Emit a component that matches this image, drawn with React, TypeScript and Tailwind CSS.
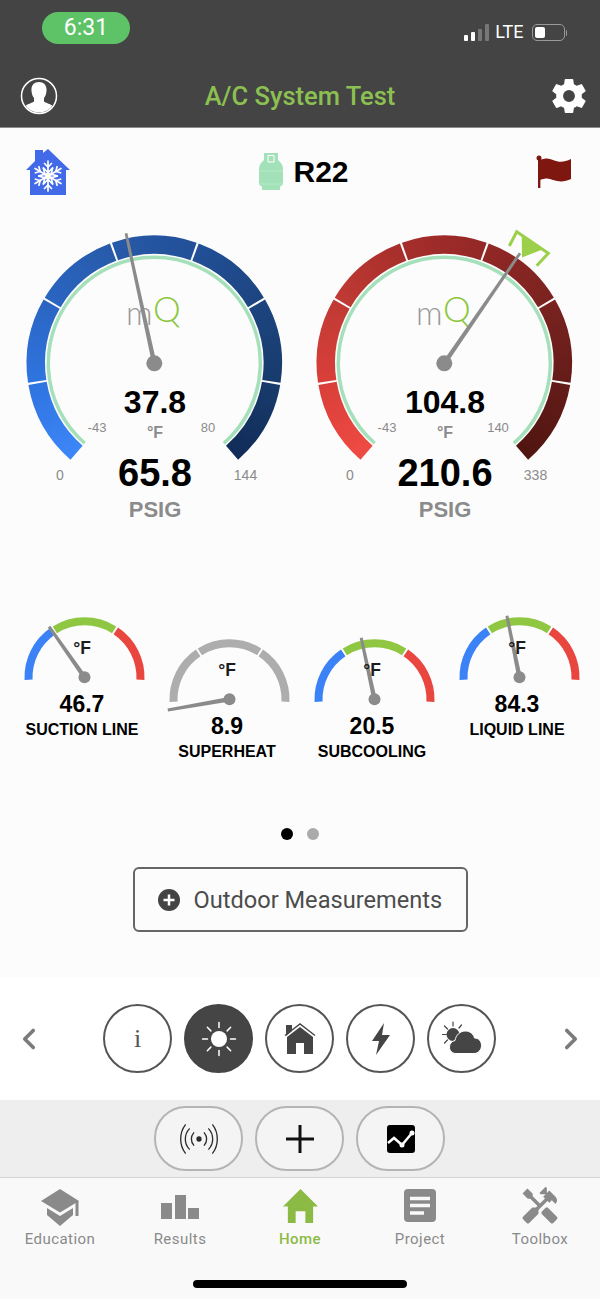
import { ChevronLeft, ChevronRight } from "lucide-react";
import { IoSettingsSharp } from "react-icons/io5";
import { MdHandyman } from "react-icons/md";

const arial = "font-['Liberation_Sans',Arial,sans-serif]";

// d: degrees clockwise from the left horizontal
const pt = (cx: number, cy: number, r: number, d: number) => {
  const a = (d * Math.PI) / 180;
  return [cx - r * Math.cos(a), cy - r * Math.sin(a)];
};

const arc = (cx: number, cy: number, r: number, from: number, to: number) => {
  const [x1, y1] = pt(cx, cy, r, from);
  const [x2, y2] = pt(cx, cy, r, to);
  return `M${x1} ${y1}A${r} ${r} 0 ${to - from > 180 ? 1 : 0} 1 ${x2} ${y2}`;
};

function Needle({ cx, cy, tx, ty, base, tip, hub }: { cx: number; cy: number; tx: number; ty: number; base: number; tip: number; hub: number }) {
  const len = Math.hypot(tx - cx, ty - cy);
  const nx = -(ty - cy) / len;
  const ny = (tx - cx) / len;
  const points = [
    [cx + (nx * base) / 2, cy + (ny * base) / 2],
    [tx + (nx * tip) / 2, ty + (ny * tip) / 2],
    [tx - (nx * tip) / 2, ty - (ny * tip) / 2],
    [cx - (nx * base) / 2, cy - (ny * base) / 2],
  ]
    .map((p) => p.join(","))
    .join(" ");
  return (
    <g fill="#8b8b8b">
      <polygon points={points} />
      <circle cx={cx} cy={cy} r={hub} />
    </g>
  );
}

type BigGaugeProps = {
  id: string;
  colors: string[];
  needle: [number, number];
  temp: string;
  pressure: string;
  tempMax: string;
  max: string;
  marker?: boolean;
};

function BigGauge({ id, colors, needle, temp, pressure, tempMax, max, marker }: BigGaugeProps) {
  const cx = 144.3;
  const cy = 143.3;
  const r = 118.5;
  const step = 278 / 7;
  const segs = Array.from({ length: 7 }, (_, i) => i);

  return (
    <div className={`relative h-[310px] w-[290px] ${arial}`}>
      <svg viewBox="0 0 290 310" className="absolute inset-0 h-[310px] w-[290px]">
        <defs>
          {segs.map((i) => {
            const [x1, y1] = pt(cx, cy, r, -49 + step * i);
            const [x2, y2] = pt(cx, cy, r, -49 + step * (i + 1));
            return (
              <linearGradient key={i} id={`${id}${i}`} gradientUnits="userSpaceOnUse" x1={x1} y1={y1} x2={x2} y2={y2}>
                <stop offset="0" stopColor={colors[i]} />
                <stop offset="1" stopColor={colors[i + 1]} />
              </linearGradient>
            );
          })}
        </defs>
        {segs.map((i) => (
          <path
            key={i}
            d={arc(cx, cy, r, -49 + step * i + (i ? 0.5 : 0), -49 + step * (i + 1) - (i < 6 ? 0.5 : 0))}
            fill="none"
            stroke={`url(#${id}${i})`}
            strokeWidth="18.5"
          />
        ))}
        <path d={arc(cx, cy, 106, -49, 229)} fill="none" stroke="#a5e0bb" strokeWidth="3.5" />
        <text x="116" y="105" fontSize="33" fill="#999999" fontWeight="300" className="font-['Lato',sans-serif]">
          m
        </text>
        <text x="143" y="102" fontSize="35" fill="#8cc63f" fontWeight="300" className="font-['Lato',sans-serif]">
          Q
        </text>
        {marker && (
          <g transform="translate(-300 -220)">
            <polyline points="509.3,246 516.7,231.7 548.3,253.3 536.7,265.7" fill="none" stroke="#9ccf4a" strokeWidth="3" />
            <polygon points="521.7,234 543,249.3 522,257.5" fill="#9ccf4a" />
          </g>
        )}
        <Needle cx={cx} cy={cy} tx={needle[0]} ty={needle[1]} base={4.5} tip={2.8} hub={8} />
      </svg>

      <span className="absolute left-[87px] top-[207px] -translate-x-1/2 -translate-y-1/2 text-[13px] leading-none text-[#8b8b8b]">-43</span>
      <span className="absolute left-[198px] top-[207px] -translate-x-1/2 -translate-y-1/2 text-[13px] leading-none text-[#8b8b8b]">{tempMax}</span>
      <span className="absolute left-[50px] top-[255px] -translate-x-1/2 -translate-y-1/2 text-[14px] leading-none text-[#8b8b8b]">0</span>
      <span className="absolute left-[235.5px] top-[255px] -translate-x-1/2 -translate-y-1/2 text-[14px] leading-none text-[#8b8b8b]">{max}</span>

      <div className="absolute inset-x-0 top-[164px] flex flex-col items-center">
        <span className="h-[37px] text-[32px] font-bold leading-[37px] text-black">{temp}</span>
        <span className="mt-1 h-4 text-[16px] font-bold leading-4 text-[#8b8b8b]">°F</span>
        <span className="mt-3 h-10 text-[38px] font-bold leading-10 text-black">{pressure}</span>
        <span className="mt-[5px] h-6 text-[22px] font-bold leading-6 text-[#8b8b8b]">PSIG</span>
      </div>
    </div>
  );
}

const COLD = ["#3d86f8", "#2f74e0", "#2b65c2", "#275aa9", "#224f97", "#1c4580", "#183b6c", "#112c58"];
const HOT = ["#ee4b43", "#d93f39", "#c03a34", "#a62e2b", "#922826", "#7a2320", "#641c19", "#501510"];

type SmallGaugeProps = {
  tip: [number, number];
  value: string;
  label: string;
  colors: [string, string, string];
  lowered?: boolean;
};

function SmallGauge({ tip, value, label, colors, lowered }: SmallGaugeProps) {
  const cx = 72.5;
  const cy = 67.3;
  return (
    <div className={`flex w-[145px] flex-col ${lowered ? "mt-[22px]" : ""} ${arial}`}>
      <div className="relative h-20">
        <svg viewBox="0 0 145 80" className="absolute inset-0 h-20 w-[145px]">
          <path d={arc(cx, cy, 56, -2.5, 56)} fill="none" stroke={colors[0]} strokeWidth="8" />
          <path d={arc(cx, cy, 56, 58, 122)} fill="none" stroke={colors[1]} strokeWidth="8" />
          <path d={arc(cx, cy, 56, 124, 182.5)} fill="none" stroke={colors[2]} strokeWidth="8" />
          <Needle cx={cx} cy={cy} tx={tip[0]} ty={tip[1]} base={4.5} tip={3} hub={6} />
        </svg>
        <span className="absolute left-[70px] top-[39px] -translate-x-1/2 -translate-y-1/2 text-[17.5px] font-bold leading-none text-[#1c1c1c]">°F</span>
      </div>
      <div className="flex flex-col items-center pr-[5px]">
        <span className="h-7 text-[23px] font-bold leading-7 text-black">{value}</span>
        <span className="mt-[3px] h-[18px] whitespace-nowrap text-[16px] font-bold leading-[18px] text-black">{label}</span>
      </div>
    </div>
  );
}

const LINE_COLORS: [string, string, string] = ["#3b82f6", "#8fc743", "#e8463f"];
const GREY_COLORS: [string, string, string] = ["#adadad", "#adadad", "#adadad"];

function SnowHouse() {
  return (
    <svg width="46" height="48" viewBox="0 0 46 48">
      <path d="M1 22 10 13V2h8v3l5-4 22 21h-4v25H5V22z" fill="#4169e8" />
      <g stroke="#ffffff" strokeWidth="1.7" strokeLinecap="round" fill="none">
        {[0, 60, 120].map((a) => (
          <g key={a} transform={`rotate(${a} 23 28)`}>
            <path d="M23 13v30" />
            <path d="M19.5 15.5 23 19l3.5-3.5M19.5 40.5 23 37l3.5 3.5" />
            <path d="M18.5 20 23 24.5l4.5-4.5M18.5 36 23 31.5l4.5 4.5" />
          </g>
        ))}
      </g>
      <circle cx="23" cy="28" r="3.5" fill="#ffffff" />
    </svg>
  );
}

function Cylinder() {
  return (
    <svg width="24" height="37" viewBox="0 0 24 37" fill="#a3e2b8">
      <path d="M5 0h14v7l2 2c2 2 3 4 3 7v14c0 2-1 3-3 3.5V37H3v-3.5C1 33 0 32 0 30V16c0-3 1-5 3-7l2-2z" />
      <path d="M9 2.5h6V9H9z" fill="none" stroke="#ffffff" strokeWidth="1" />
      <path d="M0 18h24M0 31h24" stroke="#c4eed2" strokeWidth="0.6" />
    </svg>
  );
}

function Flag() {
  return (
    <svg width="37" height="33" viewBox="0 0 37 33" fill="#7d1710">
      <circle cx="4" cy="3" r="2.5" />
      <rect x="3" y="3" width="2.4" height="30" />
      <path d="M5 5c5-2 9-2 13 0 6 2.5 11 2.5 18-1v20c-6 3-12 3-18 1-4-2-8-2-13 0z" />
    </svg>
  );
}

function Avatar() {
  return (
    <svg width="38" height="38" viewBox="0 0 38 38">
      <defs>
        <clipPath id="avatar-clip">
          <circle cx="19" cy="19" r="16.5" />
        </clipPath>
      </defs>
      <circle cx="19" cy="19" r="17.5" fill="none" stroke="#ffffff" strokeWidth="1.5" />
      <g clipPath="url(#avatar-clip)" fill="#ffffff">
        <path d="M19 5c5 0 8 3.5 7.5 9-.3 3-1 5-2.5 7v3.5c1 1.5 8 2.5 9 5.5v8H5v-8c1-3 8-4 9-5.5V21c-1.5-2-2.2-4-2.5-7C11 8.5 14 5 19 5z" />
      </g>
    </svg>
  );
}

function SunIcon({ color }: { color: string }) {
  return (
    <svg width="36" height="36" viewBox="0 0 36 36" stroke={color} strokeWidth="1.5" strokeLinecap="round">
      <circle cx="18" cy="18" r="8" fill={color} stroke="none" />
      {[0, 45, 90, 135, 180, 225, 270, 315].map((a) => (
        <path key={a} d="M18 1.5v5" transform={`rotate(${a} 18 18)`} />
      ))}
    </svg>
  );
}

function HouseIcon() {
  return (
    <svg width="32" height="32" viewBox="0 0 32 32" fill="#454545">
      <path d="M2 2h6v6l-6 5z" />
      <path d="M1 12.5 16 1l15 11.5" fill="none" stroke="#454545" strokeWidth="1.4" />
      <path d="M16 4 29 14v17h-9V20h-8v11H3V14z" />
    </svg>
  );
}

function BoltIcon() {
  return (
    <svg width="20" height="32" viewBox="0 0 20 32" fill="#454545">
      <path d="M13 0 1 18h7L5 32 19 12h-8z" />
    </svg>
  );
}

function WeatherIcon() {
  return (
    <svg width="40" height="36" viewBox="0 0 40 36">
      <g stroke="#454545" strokeWidth="1.2" strokeLinecap="round">
        <path d="M11 1v4M2.5 5l3 3M0.5 13.5h4M2.5 22l3-3M19.5 4l-2.5 3" />
      </g>
      <circle cx="11" cy="13.5" r="6.5" fill="#454545" />
      <path
        d="M14 32.5c-3.5 0-6.5-2.5-6.5-6.5 0-3.5 2.5-6 5.500-6.500C14 14 18 10 23.500 10c4.500 0 8 3 9 7 4 0 7 3 7 7.500S36 32.500 32 32.500z"
        fill="#454545"
        stroke="#ffffff"
        strokeWidth="1"
      />
    </svg>
  );
}

function CircleButton({ active, children }: { active?: boolean; children: React.ReactNode }) {
  return (
    <div
      className={`flex h-[69px] w-[69px] items-center justify-center rounded-full border-2 ${
        active ? "border-[#454545] bg-[#454545]" : "border-[#555555] bg-white"
      }`}
    >
      {children}
    </div>
  );
}

function Pill({ children }: { children: React.ReactNode }) {
  return (
    <div className="flex h-[65px] w-[89px] items-center justify-center rounded-[32px] border-2 border-[#b4b4b4] bg-[#f4f4f4]">
      {children}
    </div>
  );
}

function Tab({ label, active, children }: { label: string; active?: boolean; children: React.ReactNode }) {
  return (
    <div className="flex w-[120px] flex-col items-center">
      <div className="flex h-[38px] items-center justify-center">{children}</div>
      <span className={`mt-[3px] text-[15px] leading-5 tracking-[0.45px] ${active ? "font-medium text-[#8cbb45]" : "text-[#8a8a8a]"}`}>{label}</span>
    </div>
  );
}

export default function App() {
  return (
    <div className="flex h-[1299px] w-[600px] flex-col overflow-hidden bg-[#fcfcfc] font-['Roboto',sans-serif]">
      {/* Status bar + title */}
      <header className="h-[128px] shrink-0 border-b border-[#8d8d8d] bg-[#444444]">
        <div className="flex h-[74px] items-start justify-between pl-[42px] pr-[33px]">
          <div className="mt-3 flex h-[32px] w-[88px] items-center justify-center rounded-[16px] bg-[#5ec267] text-[23px] text-white">6:31</div>
          <div className="mt-6 flex h-[17px] items-end">
            <div className="flex items-end gap-[2.5px]">
              <span className="h-[6px] w-[4.5px] rounded-[1px] bg-white" />
              <span className="h-[9px] w-[4.5px] rounded-[1px] bg-white" />
              <span className="h-[12px] w-[4.5px] rounded-[1px] bg-[#777777]" />
              <span className="h-[17px] w-[4.5px] rounded-[1px] bg-[#777777]" />
            </div>
            <span className="ml-[6px] text-[18px] leading-[19px] text-white">LTE</span>
            <div className="ml-[8px] flex h-[17px] w-[33px] items-center rounded-[5px] border border-[#999999] p-[2px]">
              <span className="h-full w-[10px] rounded-[2px] bg-white" />
            </div>
            <span className="mb-[5px] ml-[1px] h-[6px] w-[1.5px] rounded-r-[1px] bg-[#999999]" />
          </div>
        </div>
        <div className="grid h-[44px] grid-cols-[1fr_auto_1fr] items-center px-5">
          <Avatar />
          <span className="text-[25.5px] font-medium text-[#8cc152]">A/C System Test</span>
          <IoSettingsSharp className="-mr-2 justify-self-end text-[38px] text-white" />
        </div>
      </header>

      {/* Refrigerant row */}
      <div className="flex h-[92px] shrink-0 items-center justify-between pb-[5px] pl-[25px] pr-[28px]">
        <SnowHouse />
        <div className="flex items-center gap-2.5 pl-[2px]">
          <Cylinder />
          <span className={`text-[30px] font-bold leading-none text-black ${arial}`}>R22</span>
        </div>
        <Flag />
      </div>

      {/* Main gauges */}
      <div className="flex shrink-0 px-[10px]">
        <BigGauge id="cold" colors={COLD} needle={[116, 13.3]} temp="37.8" pressure="65.8" tempMax="80" max="144" />
        <BigGauge id="hot" colors={HOT} needle={[220, 33.3]} temp="104.8" pressure="210.6" tempMax="140" max="338" marker />
      </div>

      {/* Line gauges */}
      <div className="mt-[80px] flex h-[150px] shrink-0 items-start pl-[12px]">
        <SmallGauge tip={[37.1, 16.7]} value="46.7" label="SUCTION LINE" colors={LINE_COLORS} />
        <SmallGauge tip={[10.8, 78]} value="8.9" label="SUPERHEAT" colors={GREY_COLORS} lowered />
        <SmallGauge tip={[59.2, 5.7]} value="20.5" label="SUBCOOLING" colors={LINE_COLORS} lowered />
        <SmallGauge tip={[59.9, 5.7]} value="84.3" label="LIQUID LINE" colors={LINE_COLORS} />
      </div>

      <div className="mt-[68px] flex h-3 shrink-0 items-center justify-center gap-[14px]">
        <span className="h-3 w-3 rounded-full bg-black" />
        <span className="h-3 w-3 rounded-full bg-[#ababab]" />
      </div>

      <div className="mt-[27px] flex shrink-0 justify-center">
        <div className="flex h-[65px] w-[335px] items-center gap-[14px] rounded-[6px] border-2 border-[#666666] pl-[23px]">
          <svg width="22" height="22" viewBox="0 0 22 22">
            <circle cx="11" cy="11" r="11" fill="#444444" />
            <path d="M11 5.5v11M5.5 11h11" stroke="#ffffff" strokeWidth="2.5" />
          </svg>
          <span className="pt-[2px] text-[23.6px] text-[#4c4c4c]">Outdoor Measurements</span>
        </div>
      </div>

      {/* Mode selector */}
      <div className="mt-[45px] flex h-[123px] shrink-0 items-center justify-between bg-white px-3">
        <ChevronLeft size={34} strokeWidth={2.6} className="text-[#7b7b7b]" />
        <div className="mr-[1px] flex items-center gap-3">
          <CircleButton>
            <span className="font-['Liberation_Serif',serif] text-[26px] leading-none text-[#555555]">i</span>
          </CircleButton>
          <CircleButton active>
            <SunIcon color="#ffffff" />
          </CircleButton>
          <CircleButton>
            <HouseIcon />
          </CircleButton>
          <CircleButton>
            <BoltIcon />
          </CircleButton>
          <CircleButton>
            <WeatherIcon />
          </CircleButton>
        </div>
        <ChevronRight size={34} strokeWidth={2.6} className="text-[#7b7b7b]" />
      </div>

      <div className="flex h-[78px] shrink-0 items-center justify-center gap-3 border-b border-[#d4d4d4] bg-[#eeeeee] pr-[1px]">
        <Pill>
          <svg width="38" height="30" viewBox="0 0 42 34" fill="none" stroke="#2a2a2a" strokeWidth="1.5" strokeLinecap="round">
            <circle cx="21" cy="17" r="3" fill="#2a2a2a" stroke="none" />
            <path d="M15 10c-3.5 4-3.5 10 0 14M27 10c3.5 4 3.5 10 0 14" />
            <path d="M10 5.5c-6 6.5-6 16.5 0 23M32 5.5c6 6.5 6 16.5 0 23" />
            <path d="M5.5 1C-1.5 10-1.5 24 5.5 33M36.5 1c7 9 7 23 0 32" />
          </svg>
        </Pill>
        <Pill>
          <svg width="28" height="28" viewBox="0 0 28 28" stroke="#111111" strokeWidth="3">
            <path d="M14 0v28M0 14h28" />
          </svg>
        </Pill>
        <Pill>
          <svg width="28" height="28" viewBox="0 0 28 28">
            <rect width="28" height="28" rx="3" fill="#000000" />
            <path d="M1 18 7 13l8 7L25 8" fill="none" stroke="#ffffff" strokeWidth="2.5" />
            <circle cx="15" cy="20" r="2.5" fill="#ffffff" />
            <circle cx="25" cy="8" r="2.5" fill="#ffffff" />
          </svg>
        </Pill>
      </div>

      {/* Tab bar */}
      <div className="flex flex-1 flex-col bg-[#f9f9f9]">
        <div className="flex pt-[10px]">
          <Tab label="Education">
            <svg width="38" height="38" viewBox="0 0 38 38" fill="#8a8a8a">
              <path d="M0 13 19 1l19 12-19 11.5z" />
              <path d="M6 20v7l13 11 13-11v-7l-13 8z" />
              <rect x="34.5" y="13" width="3" height="15" />
            </svg>
          </Tab>
          <Tab label="Results">
            <svg width="38" height="24" viewBox="0 0 38 24" fill="#8a8a8a">
              <rect x="0" y="8" width="11" height="16" />
              <rect x="14" y="0" width="11" height="24" />
              <rect x="27" y="13" width="11" height="11" />
            </svg>
          </Tab>
          <Tab label="Home" active>
            <svg width="35" height="34" viewBox="0 0 36 35" fill="#8cbb45" className="mb-[3px]">
              <path d="M18 0 36 18h-5v17h-8V23H13v12H5V18H0z" />
            </svg>
          </Tab>
          <Tab label="Project">
            <svg width="32" height="33" viewBox="0 0 32 33" className="mb-[3px]">
              <rect width="32" height="33" rx="4" fill="#8a8a8a" />
              <path d="M6 9.5h20M6 16.5h20M6 24h14" stroke="#f9f9f9" strokeWidth="3.5" />
            </svg>
          </Tab>
          <Tab label="Toolbox">
            <MdHandyman className="mb-[3px] text-[42px] text-[#8a8a8a]" />
          </Tab>
        </div>
        <div className="mt-[31px] flex justify-center">
          <span className="h-2 w-[214px] rounded-full bg-black" />
        </div>
      </div>
    </div>
  );
}
